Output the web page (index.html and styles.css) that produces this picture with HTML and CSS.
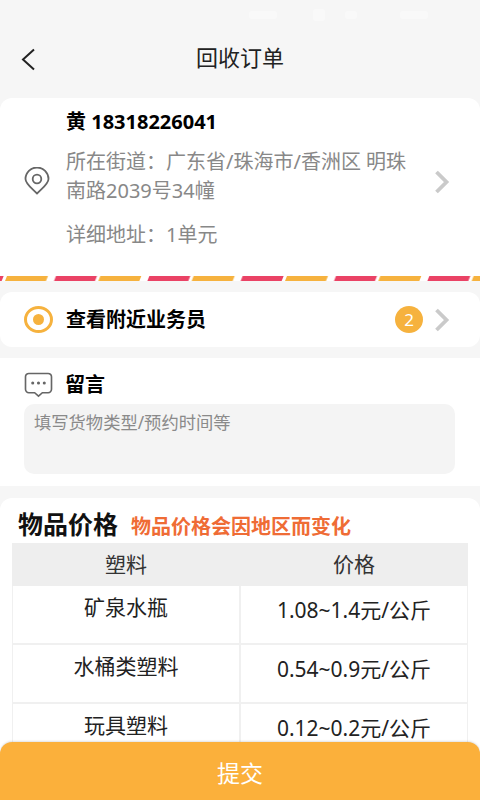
FILE: index.html
```html
<!DOCTYPE html>
<html lang="zh">
<head>
<meta charset="utf-8">
<title>回收订单</title>
<link rel="stylesheet" href="styles.css">
</head>
<body>
<div class="app">
  <div class="status"><i class="s1"></i><i class="s2"></i><i class="s3"></i><i class="s4"></i></div>
  <header class="nav">
    <svg class="back" viewBox="0 0 16 24" width="16" height="24"><path d="M14 2.500 3 12.500l11 10" fill="none" stroke="#222" stroke-width="2"/></svg>
    <h1>回收订单</h1>
  </header>
  <section class="card address">
    <div class="addr-row">
      <svg class="pin" viewBox="0 0 26 28" width="26" height="28"><path d="M13 26.500C8 21.500 1.500 17 1.500 12a11.500 11.500 0 0 1 23 0c0 5-6.500 9.500-11.500 14.500z" fill="none" stroke="#666" stroke-width="1.800" stroke-linejoin="round"/><circle cx="13" cy="12" r="4.300" fill="none" stroke="#666" stroke-width="1.800"/></svg>
      <div class="addr-text">
        <div class="name">黄 18318226041</div>
        <p class="street">所在街道：广东省/珠海市/香洲区 明珠南路2039号34幢</p>
        <p class="detail">详细地址：1单元</p>
      </div>
      <svg class="chev" viewBox="0 0 16 24" width="16" height="24"><path d="M2.500 2 12.500 12l-10 10" fill="none" stroke="#cacaca" stroke-width="3.800"/></svg>
    </div>
    <svg class="stripe" width="480" height="5" viewBox="0 0 480 5">
      <defs>
        <pattern id="air" x="4" width="93.330" height="5" patternUnits="userSpaceOnUse">
          <polygon points="1,5 3,0 44,0 42,5" fill="#f6b23e"/>
          <polygon points="50,5 52,0 93,0 91,5" fill="#ea4265"/>
        </pattern>
      </defs>
      <rect width="480" height="5" fill="url(#air)"/>
    </svg>
  </section>
  <section class="card nearby">
    <span class="radio"><b></b></span>
    <strong>查看附近业务员</strong>
    <span class="badge">2</span>
    <svg class="chev" viewBox="0 0 16 24" width="16" height="24"><path d="M2.500 2 12.500 12l-10 10" fill="none" stroke="#cacaca" stroke-width="3.800"/></svg>
  </section>
  <section class="card message">
    <div class="msg-head">
      <svg viewBox="0 0 30 27" width="29" height="26"><path d="M5 1.500h20a3.500 3.500 0 0 1 3.500 3.500v13a3.500 3.500 0 0 1-3.500 3.500h-6l-4 3.500-4-3.500H5A3.500 3.500 0 0 1 1.500 18V5A3.500 3.500 0 0 1 5 1.500z" fill="none" stroke="#666" stroke-width="1.700"/><circle cx="9" cy="11.500" r="1.600" fill="#666"/><circle cx="15" cy="11.500" r="1.600" fill="#666"/><circle cx="21" cy="11.500" r="1.600" fill="#666"/></svg>
      <strong>留言</strong>
    </div>
    <div class="input">填写货物类型/预约时间等</div>
  </section>
  <section class="card prices">
    <div class="price-head"><h2>物品价格</h2><span>物品价格会因地区而变化</span></div>
    <div class="table">
      <div class="th">塑料</div><div class="th">价格</div>
      <div class="td">矿泉水瓶</div><div class="td num">1.08~1.4元/公斤</div>
      <div class="td">水桶类塑料</div><div class="td num">0.54~0.9元/公斤</div>
      <div class="td">玩具塑料</div><div class="td num">0.12~0.2元/公斤</div>
    </div>
  </section>
  <button class="submit">提交</button>
</div>
</body>
</html>
```
FILE: styles.css
```css
* { box-sizing: border-box; }
html, body { margin: 0; padding: 0; }
body { font-family: "Noto Sans", "Noto Sans CJK SC", sans-serif; background: #f6f6f6; }
.app { position: relative; width: 480px; height: 800px; overflow: hidden; background: #f6f6f6; }
.status { height: 30px; display: flex; align-items: center; justify-content: flex-end; padding: 0 52px 0 0; }
.status i { display: block; background: #f9f9f9; border-radius: 3px; }
.status .s1 { width: 28px; height: 8px; margin-right: 36px; }
.status .s2 { width: 12px; height: 12px; margin-right: 20px; }
.status .s3 { width: 12px; height: 8px; margin-right: 43px; }
.status .s4 { width: 28px; height: 8px; }
.nav { height: 68px; position: relative; display: flex; align-items: center; justify-content: center; padding-bottom: 14px; }
.back { position: absolute; left: 20px; top: 17px; }
.nav h1 { margin: 0; font-size: 22px; font-weight: 400; color: #222; line-height: 32px; }
.card { background: #fff; border-radius: 12px; }
.address { height: 183px; margin-bottom: 11px; border-radius: 12px 12px 0 0; display: flex; flex-direction: column; }
.addr-row { flex: 1; display: flex; align-items: center; padding: 0 30px 0 24px; }
.addr-text { flex: 1; margin: 0 0 0 16px; align-self: flex-start; padding-top: 10px; }
.name { font-size: 20px; font-weight: 700; line-height: 28px; color: #000; }
.street, .detail { margin: 0; font-size: 20px; line-height: 29px; color: #888; }
.street { margin-top: 11px; width: 345px; }
.detail { margin-top: 15px; }
.pin { position: relative; top: -6px; }
.chev { flex: none; }
.address .chev { position: relative; top: -5px; }
.stripe { display: block; flex: none; }
.nearby { height: 55px; margin-bottom: 11px; display: flex; align-items: center; padding: 0 30px 0 24px; }
.radio { width: 29px; height: 27px; border: 3px solid #f6b23e; border-radius: 50%; display: flex; align-items: center; justify-content: center; }
.radio b { width: 11px; height: 11px; border-radius: 50%; background: #f6b23e; }
.nearby strong { flex: 1; margin-left: 13px; font-size: 20px; line-height: 28px; color: #000; }
.badge { width: 28px; height: 27px; margin-right: 11px; border-radius: 50%; background: #f6b23e; color: #fff; font-size: 17px; line-height: 27px; text-align: center; }
.message { height: 128px; margin-bottom: 12px; padding: 13px 24px 0; border-radius: 0; }
.msg-head { display: flex; align-items: center; gap: 12px; height: 28px; }
.msg-head strong { font-size: 20px; line-height: 28px; color: #000; }
.input { height: 70px; margin-top: 5px; width: 431px; background: #f4f4f4; border-radius: 10px; padding: 6px 10px; font-size: 17.300px; line-height: 26px; color: #8a8a8a; }
.prices { height: 320px; padding: 9px 12px 0; }
.price-head { display: flex; align-items: baseline; height: 36px; padding-left: 6px; }
.price-head h2 { margin: 0; font-size: 25px; line-height: 35px; font-weight: 700; color: #111; }
.price-head span { margin-left: 13px; font-size: 20px; font-weight: 700; color: #ef6c35; }
.table { display: grid; grid-template-columns: 226px 226px; grid-template-rows: 41px; grid-auto-rows: 57px; column-gap: 2px; row-gap: 2px; padding: 0 1px; background: #f0f0f0; }
.th { margin: 0 -1px -2px; background: #eee; text-align: center; font-size: 21px; line-height: 42px; color: #333; }
.td { background: #fff; text-align: center; font-size: 21px; line-height: 42px; color: #222; }
.num { line-height: 48px; }
.submit { position: absolute; left: 0; bottom: 0; width: 480px; height: 58px; border: 0; border-radius: 12px 12px 0 0; background: #fbb03b; box-shadow: 0 -1px 2px rgba(0,0,0,.12); color: #fff; font: 400 23px/58px "Noto Sans CJK SC", sans-serif; }
```
